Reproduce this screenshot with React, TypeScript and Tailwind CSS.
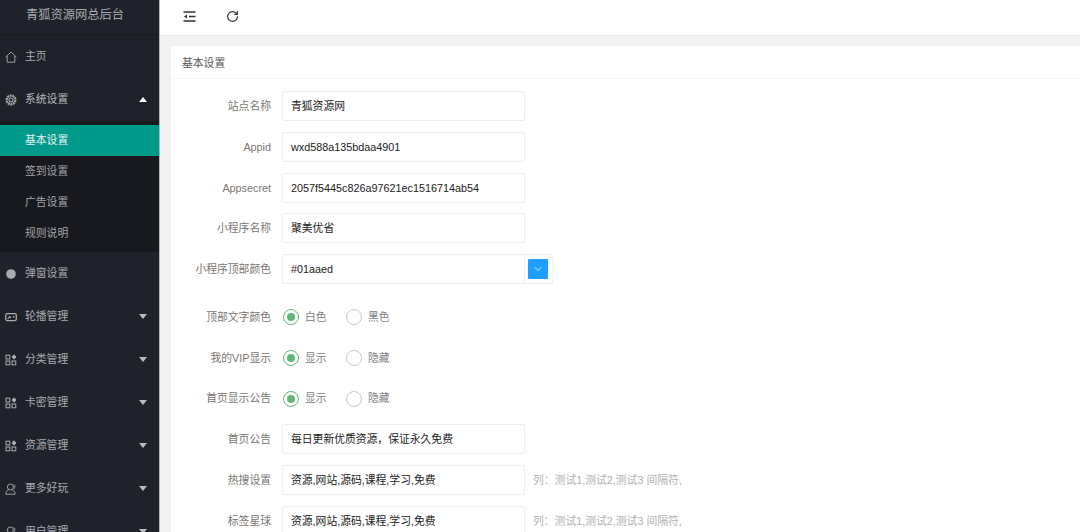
import { ReactNode } from 'react';
import { RotateCw, ChevronDown } from 'lucide-react';

const HomeIcon = () => (
  <svg width="12" height="12" viewBox="0 0 12 12" fill="none" stroke="currentColor" strokeWidth="0.9">
    <path d="M0.6 6.2 6 1 11.4 6.2M2.2 4.8v6.4h7.6V4.8" />
  </svg>
);

const GearIcon = () => (
  <svg width="12" height="12" viewBox="0 0 12 12" fill="none" stroke="currentColor">
    <circle cx="6" cy="6" r="2" strokeWidth="1.1" />
    <circle cx="6" cy="6" r="4.4" strokeDasharray="2 0.7" strokeWidth="2.2" />
  </svg>
);

const DotIcon = () => (
  <svg width="12" height="12" viewBox="0 0 12 12" fill="currentColor">
    <circle cx="6" cy="6" r="4.8" />
  </svg>
);

const ImageIcon = () => (
  <svg width="12" height="12" viewBox="0 0 12 12" fill="none" stroke="currentColor" strokeWidth="1.3">
    <rect x="0.7" y="2.6" width="10.6" height="7" rx="1.6" />
    <path d="M2.6 7.8 4.8 5.6 6.2 6.8" strokeWidth="1.1" />
    <path d="M8 5h1.4v1.4H8Z" fill="currentColor" stroke="none" />
  </svg>
);

const AppsIcon = () => (
  <svg width="12" height="12" viewBox="0 0 12 12" fill="none" stroke="currentColor" strokeWidth="1">
    <rect x="1" y="1.2" width="3.8" height="3.8" />
    <rect x="1" y="7" width="3.8" height="3.8" />
    <rect x="7" y="7" width="3.8" height="3.8" />
    <path d="M9 0.8 11 3 9 5.2 7 3Z" fill="currentColor" />
  </svg>
);

const UserIcon = () => (
  <svg width="12" height="12" viewBox="0 0 12 12" fill="none" stroke="currentColor" strokeWidth="0.9">
    <circle cx="5.4" cy="4" r="3" />
    <path d="M0.8 11.2c0-2.6 1.6-4.2 3-4.6M7 6.6c1.6.4 3 2 3.2 4.6H0.8M8.8 1.4c1.2.6 1.6 3.2.2 4.4" />
  </svg>
);

const IndentIcon = () => (
  <svg width="13" height="11" viewBox="0 0 13 11" fill="none" stroke="#333" strokeWidth="1.3">
    <path d="M0.5 1h12M6 5.5h6.5M0.5 10h12" />
    <path d="M4 3.4 1 5.5 4 7.6Z" fill="#333" stroke="none" />
  </svg>
);

const Caret = ({ up }: { up?: boolean }) => (
  <span
    className={
      up
        ? 'ml-auto mr-[12px] h-0 w-0 border-x-[4.5px] border-b-[5px] border-x-transparent border-b-white'
        : 'ml-auto mr-[12px] h-0 w-0 border-x-[4.5px] border-t-[5px] border-x-transparent border-t-[#b9bbbe]'
    }
  />
);

const NavItem = ({ icon, label, caret, up }: { icon: ReactNode; label: string; caret?: boolean; up?: boolean }) => (
  <div className={`flex h-[43px] shrink-0 items-center pl-[5px] text-[10.8px] ${up ? 'text-[#b8babd]' : 'text-[#a9abaf]'}`}>
    <span className="flex w-[20px] shrink-0 text-[#a9abaf]">{icon}</span>
    <span>{label}</span>
    {caret && <Caret up={up} />}
  </div>
);

const SubItem = ({ label, active }: { label: string; active?: boolean }) => (
  <div
    className={`flex h-[30.8px] shrink-0 items-center pl-[25px] text-[10.8px] ${
      active ? 'bg-[#009a8a] text-[#e6f4f2]' : 'text-[#a3a5a9]'
    }`}
  >
    {label}
  </div>
);

const Sidebar = () => (
  <aside className="flex h-[532px] w-[160px] shrink-0 flex-col overflow-hidden border-r-[1px] border-[#b5b6b8] bg-[#1f222b]">
    <div className="flex h-[35px] shrink-0 items-center justify-center border-b border-[#1a1c23] pb-[4px] pr-[9px] text-[12.25px] text-[#a9abaf]">
      青狐资源网总后台
    </div>
    <NavItem icon={<HomeIcon />} label="主页" />
    <NavItem icon={<GearIcon />} label="系统设置" caret up />
    <div className="flex h-[131px] shrink-0 flex-col bg-[#18191f] pt-[4px]">
      <SubItem label="基本设置" active />
      <SubItem label="签到设置" />
      <SubItem label="广告设置" />
      <SubItem label="规则说明" />
    </div>
    <NavItem icon={<DotIcon />} label="弹窗设置" />
    <NavItem icon={<ImageIcon />} label="轮播管理" caret />
    <NavItem icon={<AppsIcon />} label="分类管理" caret />
    <NavItem icon={<AppsIcon />} label="卡密管理" caret />
    <NavItem icon={<AppsIcon />} label="资源管理" caret />
    <NavItem icon={<UserIcon />} label="更多好玩" caret />
    <NavItem icon={<UserIcon />} label="用户管理" caret />
  </aside>
);

const Row = ({ label, children, className = '' }: { label: string; children: ReactNode; className?: string }) => (
  <div className={`flex h-[30px] shrink-0 items-center ${className}`}>
    <label className="w-[100px] shrink-0 text-right text-[10.8px] text-[#7b7671]">{label}</label>
    <div className="flex items-center pl-[11px]">{children}</div>
  </div>
);

const TextBox = ({ value }: { value: string }) => (
  <div className="flex h-[30px] w-[243px] shrink-0 items-center rounded-[2px] border border-[#eeeeee] bg-white pl-[8px] text-[10.8px] text-[#222]">
    {value}
  </div>
);

const Radio = ({ label, checked }: { label: string; checked?: boolean }) => (
  <div className="ml-px flex w-[62px] shrink-0 items-center gap-[6px]">
    <span
      className={`flex h-[16px] w-[16px] items-center justify-center rounded-full border ${
        checked ? 'border-[#5fb878]' : 'border-[#c9c9c9]'
      }`}
    >
      {checked && <span className="h-[8px] w-[8px] rounded-full bg-[#5fb878]" />}
    </span>
    <span className="text-[10.8px] text-[#808084]">{label}</span>
  </div>
);

const Hint = ({ text }: { text: string }) => <span className="ml-[8px] text-[10.8px] text-[#b2b2b2]">{text}</span>;

const tags = '资源,网站,源码,课程,学习,免费';
const tagHint = '列：测试1,测试2,测试3 间隔符,';

export default function App() {
  return (
    <div
      className="flex h-[532px] w-[1080px] overflow-hidden bg-[#f2f2f2]"
      style={{ fontFamily: '"Liberation Sans", "Noto Sans CJK SC", sans-serif' }}
    >
      <Sidebar />
      <main className="flex min-w-0 flex-1 flex-col">
        <header className="flex h-[36px] shrink-0 items-center gap-[30px] border-b border-[#eaeaea] bg-white pb-[2px] pl-[23px]">
          <IndentIcon />
          <RotateCw size={13} color="#333" strokeWidth={2.2} />
        </header>
        <section className="ml-[11px] mt-[10px] flex-1 bg-white">
          <div className="flex h-[33px] items-center border-b border-[#f6f6f6] pl-[11px] pt-[2px] text-[10.8px] text-[#55555a]">
            基本设置
          </div>
          <div className="flex flex-col gap-[10.8px] pt-[12px]">
            <Row label="站点名称"><TextBox value="青狐资源网" /></Row>
            <Row label="Appid"><TextBox value="wxd588a135bdaa4901" /></Row>
            <Row label="Appsecret"><TextBox value="2057f5445c826a97621ec1516714ab54" /></Row>
            <Row label="小程序名称"><TextBox value="聚美优省" /></Row>
            <Row label="小程序顶部颜色" className="mb-[7px]">
              <div className="flex h-[30px] w-[271px] shrink-0 items-center rounded-[2px] border border-[#eeeeee]">
                <span className="flex-1 pl-[8px] text-[10.8px] text-[#222]">#01aaed</span>
                <span className="flex h-full w-[28px] items-center justify-center border-l border-[#eeeeee] pr-[2px]">
                  <span className="flex h-[20px] w-[20px] items-center justify-center rounded-[1px] bg-[#1e9fff]">
                    <ChevronDown size={12} color="#fff" strokeWidth={1.5} />
                  </span>
                </span>
              </div>
            </Row>
            <Row label="顶部文字颜色"><Radio label="白色" checked /><Radio label="黑色" /></Row>
            <Row label="我的VIP显示"><Radio label="显示" checked /><Radio label="隐藏" /></Row>
            <Row label="首页显示公告"><Radio label="显示" checked /><Radio label="隐藏" /></Row>
            <Row label="首页公告"><TextBox value="每日更新优质资源，保证永久免费" /></Row>
            <Row label="热搜设置"><TextBox value={tags} /><Hint text={tagHint} /></Row>
            <Row label="标签星球"><TextBox value={tags} /><Hint text={tagHint} /></Row>
          </div>
        </section>
      </main>
    </div>
  );
}
